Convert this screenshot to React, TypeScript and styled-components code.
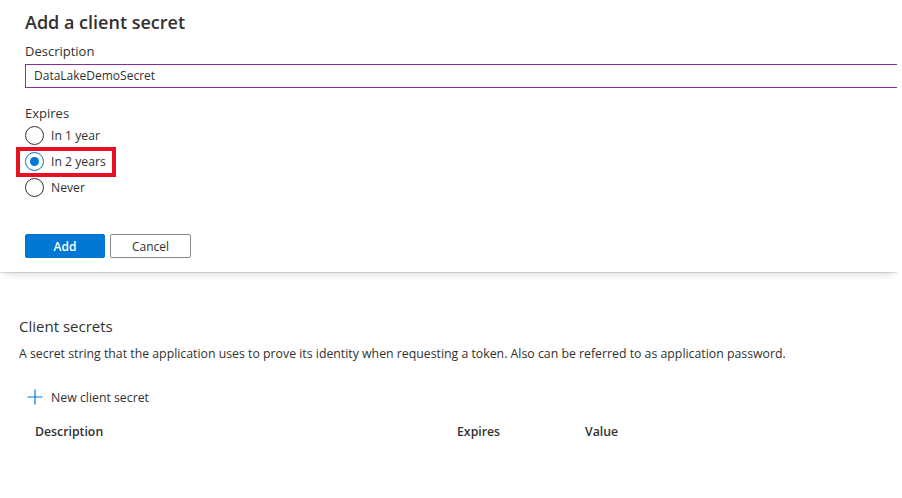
import React from "react";
import styled, { createGlobalStyle } from "styled-components";

const Global = createGlobalStyle`
  html, body { margin: 0; padding: 0; background: #fff; }
  body { font-family: "Segoe UI", "Open Sans", "Noto Sans", sans-serif; color: #323130; overflow: hidden; }
  * { box-sizing: border-box; }
`;

const Page = styled.div`
  width: 902px;
  height: 498px;
  display: flex;
  flex-direction: column;
`;

const Panel = styled.div`
  width: 897px;
  height: 272px;
  padding: 10px 0 0 25px;
  background: #fff;
  box-shadow: 0 1px 1px rgba(0, 0, 0, 0.12), 0 7px 8px -5px rgba(0, 0, 0, 0.14);
  clip-path: inset(0 0 -20px 0);
  position: relative;
  z-index: 1;
  display: flex;
  flex-direction: column;
`;

const Title = styled.h1`
  margin: 0;
  font-size: 18px;
  font-weight: 600;
  line-height: 24px;
`;

const Label = styled.div<{ $top: number }>`
  font-size: 13px;
  line-height: 18px;
  margin-top: ${(p) => p.$top}px;
`;

const Input = styled.div`
  margin-top: 4px;
  width: 900px;
  height: 24px;
  border: 1px solid #8a2da5;
  font-size: 12px;
  line-height: 22px;
  padding-left: 8px;
`;

const RadioList = styled.div`
  display: flex;
  flex-direction: column;
`;

const RadioRow = styled.div`
  position: relative;
  height: 26px;
  display: flex;
  align-items: center;
  gap: 7px;
  font-size: 12.2px;
`;

const Circle = styled.span<{ $checked?: boolean }>`
  width: 19px;
  height: 19px;
  border-radius: 50%;
  border: 1px solid ${(p) => (p.$checked ? "#0078d4" : "#323130")};
  display: flex;
  align-items: center;
  justify-content: center;
  &::after {
    content: "";
    width: 9px;
    height: 9px;
    border-radius: 50%;
    background: ${(p) => (p.$checked ? "#0078d4" : "transparent")};
  }
`;

const Highlight = styled.span`
  position: absolute;
  left: -9px;
  top: -1px;
  width: 100px;
  height: 30px;
  border: 4px solid #e81123;
`;

const Buttons = styled.div`
  display: flex;
  gap: 5px;
  margin-top: 34px;
`;

const Button = styled.button<{ $primary?: boolean }>`
  width: ${(p) => (p.$primary ? 80 : 81)}px;
  height: 24px;
  font-family: inherit;
  font-size: 12px;
  font-weight: ${(p) => (p.$primary ? 600 : 400)};
  color: ${(p) => (p.$primary ? "#fff" : "#323130")};
  background: ${(p) => (p.$primary ? "#0078d4" : "#fff")};
  border: 1px solid ${(p) => (p.$primary ? "#0078d4" : "#8a8886")};
  border-radius: 2px;
  padding: 0;
`;

const Section = styled.div`
  padding: 44px 0 0 19px;
  display: flex;
  flex-direction: column;
`;

const SectionTitle = styled.h2`
  margin: 0;
  font-size: 15px;
  font-weight: 400;
  line-height: 20px;
`;

const Desc = styled.p`
  margin: 9px 0 0;
  font-size: 12.3px;
  line-height: 18px;
`;

const NewButton = styled.div`
  margin-top: 24px;
  padding-left: 8px;
  display: flex;
  align-items: center;
  gap: 8px;
  font-size: 12.3px;
  height: 20px;
`;

const TableHead = styled.div`
  margin-top: 16px;
  display: grid;
  grid-template-columns: 422px 128px 1fr;
  padding-left: 16px;
  font-size: 12.3px;
  font-weight: 600;
  line-height: 18px;
`;

const options = ["In 1 year", "In 2 years", "Never"];

export default function App() {
  return (
    <Page>
      <Global />
      <Panel>
        <Title>Add a client secret</Title>
        <Label $top={8}>Description</Label>
        <Input>DataLakeDemoSecret</Input>
        <Label $top={16}>Expires</Label>
        <RadioList>
          {options.map((o, i) => (
            <RadioRow key={o}>
              {i === 1 && <Highlight />}
              <Circle $checked={i === 1} />
              {o}
            </RadioRow>
          ))}
        </RadioList>
        <Buttons>
          <Button $primary>Add</Button>
          <Button>Cancel</Button>
        </Buttons>
      </Panel>
      <Section>
        <SectionTitle>Client secrets</SectionTitle>
        <Desc>
          A secret string that the application uses to prove its identity when requesting a token. Also can be referred to as application password.
        </Desc>
        <NewButton>
          <svg width="16" height="16" viewBox="0 0 16 16">
            <path d="M8 0.5V15.5M0.5 8H15.5" stroke="#0078d4" strokeWidth="1.2" />
          </svg>
          New client secret
        </NewButton>
        <TableHead>
          <span>Description</span>
          <span>Expires</span>
          <span>Value</span>
        </TableHead>
      </Section>
    </Page>
  );
}
